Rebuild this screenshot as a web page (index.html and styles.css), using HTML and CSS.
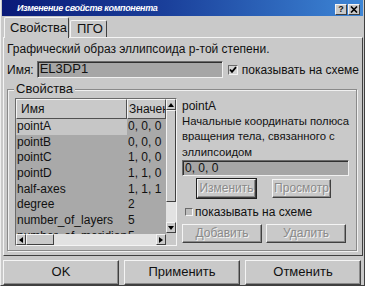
FILE: index.html
```html
<!DOCTYPE html>
<html>
<head>
<meta charset="utf-8">
<link rel="stylesheet" href="styles.css">
</head>
<body>
<div class="win">
  <div class="title">
    <span class="title-text">Изменение свойств компонента</span>
    <div class="tbtns">
      <span class="tbtn">?</span>
      <span class="tbtn"><svg width="8" height="7" viewBox="0 0 8 7"><path d="M1 0.5L7 6.5M7 0.5L1 6.5" stroke="#000" stroke-width="1.6"/></svg></span>
    </div>
  </div>
  <div class="tabs">
    <div class="tab active">Свойства</div>
    <div class="tab">ПГО</div>
  </div>
  <div class="panel">
    <div class="desc">Графический образ эллипсоида p-той степени.</div>
    <div class="namerow">
      <span class="lbl">Имя:</span>
      <div class="field name">EL3DP1</div>
      <span class="chk"><svg width="8" height="8" viewBox="0 0 8 8"><path d="M1 3.5L3 5.8L7 1.2" fill="none" stroke="#000" stroke-width="1.8"/></svg></span>
      <span class="chk-text">показывать на схеме</span>
    </div>
    <div class="group">
      <span class="legend">Свойства</span>
      <div class="list">
        <div class="list-main">
          <div class="list-head">
            <div class="hcell c1">Имя</div>
            <div class="hcell c2">Значен</div>
          </div>
          <div class="rows">
            <div class="row sel"><span class="c1">pointA</span><span class="c2">0, 0, 0</span></div>
            <div class="row"><span class="c1">pointB</span><span class="c2">0, 0, 0</span></div>
            <div class="row"><span class="c1">pointC</span><span class="c2">1, 0, 0</span></div>
            <div class="row"><span class="c1">pointD</span><span class="c2">1, 1, 0</span></div>
            <div class="row"><span class="c1">half-axes</span><span class="c2">1, 1, 1</span></div>
            <div class="row"><span class="c1">degree</span><span class="c2">2</span></div>
            <div class="row"><span class="c1">number_of_layers</span><span class="c2">5</span></div>
            <div class="row"><span class="c1">number_of_meridians</span><span class="c2">5</span></div>
          </div>
          <div class="hscroll">
            <span class="sbtn"><svg width="4" height="6" viewBox="0 0 4 6"><path d="M4 0L0 3L4 6Z"/></svg></span>
            <span class="hthumb"></span>
            <span class="htrack"></span>
            <span class="sbtn"><svg width="4" height="6" viewBox="0 0 4 6"><path d="M0 0L4 3L0 6Z"/></svg></span>
          </div>
        </div>
        <div class="vscroll">
          <span class="sbtn"><svg width="6" height="4" viewBox="0 0 6 4"><path d="M0 4L3 0L6 4Z"/></svg></span>
          <span class="vthumb"></span>
          <span class="vtrack"></span>
          <span class="sbtn"><svg width="6" height="4" viewBox="0 0 6 4"><path d="M0 0L3 4L6 0Z"/></svg></span>
          <span class="corner"></span>
        </div>
      </div>
      <div class="side">
        <div class="pname">pointA</div>
        <div class="pdesc">Начальные координаты полюса<br>вращения тела, связанного с<br>эллипсоидом</div>
        <div class="field value">0, 0, 0</div>
        <div class="brow1">
          <div class="btn default dis">Изменить</div>
          <div class="btn dis">Просмотр</div>
        </div>
        <div class="chkrow">
          <span class="chk small"></span>
          <span class="chk-text">показывать на схеме</span>
        </div>
        <div class="brow2">
          <div class="btn dis wide">Добавить</div>
          <div class="btn dis wide">Удалить</div>
        </div>
      </div>
    </div>
  </div>
  <div class="bottom">
    <div class="btn big">OK</div>
    <div class="btn big">Применить</div>
    <div class="btn big">Отменить</div>
  </div>
</div>
</body>
</html>
```

FILE: styles.css
```css
* { box-sizing: border-box; }
html, body { margin: 0; padding: 0; }
body {
  width: 365px;
  height: 286px;
  overflow: hidden;
  font-family: "Liberation Sans", Arial, sans-serif;
  font-size: 12px;
  color: #111;
  background: #c9c9c9;
}
.win {
  width: 365px;
  height: 286px;
  background: #c9c9c9;
  border-left: 1px solid #efefef;
  border-right: 1px solid #404040;
  border-bottom: 1px solid #404040;
  display: flex;
  flex-direction: column;
  padding: 0 1px 0 1px;
}
.title {
  height: 16px;
  background: linear-gradient(to right, #0a1a78 0%, #1a3f9a 45%, #3d86d6 100%);
  display: flex;
  align-items: center;
  justify-content: space-between;
  padding: 0 3px 0 15px;
}
.title-text {
  color: #fff;
  font-weight: bold;
  font-size: 9px;
  letter-spacing: -0.35px;
  font-style: italic;
  white-space: nowrap;
}
.tbtns { display: flex; gap: 1px; margin-top: 3px; }
.tbtn {
  width: 12px;
  height: 11px;
  background: #c9c9c9;
  border: 1px solid;
  border-color: #f4f4f4 #404040 #404040 #f4f4f4;
  font-size: 9px;
  font-weight: bold;
  line-height: 9px;
  text-align: center;
  display: flex;
  align-items: center;
  justify-content: center;
}
.tabs {
  display: flex;
  align-items: flex-end;
  height: 20px;
  padding-left: 2px;
  margin-top: 1px;
  position: relative;
  z-index: 1;
}
.tab {
  height: 17px;
  padding: 0 6px;
  font-size: 13px;
  line-height: 16px;
  border: 1px solid;
  border-color: #f4f4f4 #404040 transparent #f4f4f4;
  border-bottom: none;
  background: #c9c9c9;
  border-radius: 2px 2px 0 0;
}
.tab.active {
  height: 21px;
  width: 65px;
  margin-bottom: -1px;
  line-height: 19px;
  padding: 0 5px;
}
.tab + .tab { margin-left: 1px; width: 37px; }
.panel {
  width: 360px;
  height: 219px;
  margin-left: 1px;
  border: 1px solid;
  border-color: #f4f4f4 #404040 #404040 #f4f4f4;
  padding: 4px 3px 0 3px;
  display: flex;
  flex-direction: column;
}
.desc { height: 14px; line-height: 14px; white-space: nowrap; }
.namerow {
  margin-top: 5px;
  height: 17px;
  display: flex;
  align-items: center;
}
.lbl { width: 30px; }
.field {
  background: #a6a6a6;
  border: 1px solid;
  border-color: #6a6a6a #f0f0f0 #f0f0f0 #6a6a6a;
  box-shadow: inset 1px 1px 0 #303030;
  height: 17px;
  line-height: 14px;
  padding-left: 2px;
  white-space: nowrap;
}
.field.name { width: 188px; font-size: 13px; }
.chk {
  width: 10px;
  height: 10px;
  margin-left: 5px;
  margin-right: 4px;
  background: #d4d4d4;
  border: 1px solid;
  border-color: #6a6a6a #f4f4f4 #f4f4f4 #6a6a6a;
  display: flex;
  align-items: center;
  justify-content: center;
}
.chk.small { width: 8px; height: 8px; margin-left: 3px; margin-right: 2px; background: #bdbdbd; }
.chk-text { white-space: nowrap; }
.group {
  position: relative;
  margin-top: 11px;
  width: 350px;
  height: 162px;
  border: 1px solid #8a8a8a;
  box-shadow: inset 1px 1px 0 #f0f0f0, 1px 1px 0 #f0f0f0;
  padding: 8px 6px 3px 7px;
  display: flex;
}
.legend {
  position: absolute;
  left: 6px;
  top: -8px;
  padding: 0 2px;
  background: #c9c9c9;
  font-size: 13px;
  line-height: 14px;
}
.list {
  width: 162px;
  height: 148px;
  border: 1px solid;
  border-color: #6a6a6a #f4f4f4 #f4f4f4 #6a6a6a;
  display: flex;
  background: #a9a9a9;
}
.list-main {
  width: 150px;
  display: flex;
  flex-direction: column;
}
.list-head {
  height: 20px;
  display: flex;
  background: #c9c9c9;
}
.hcell {
  height: 20px;
  line-height: 18px;
  border: 1px solid;
  border-color: #f4f4f4 #505050 #505050 #f4f4f4;
  font-size: 12px;
  white-space: nowrap;
  overflow: hidden;
}
.hcell.c1 { width: 111px; padding-left: 4px; }
.hcell.c2 { flex: 1; padding-left: 1px; }
.rows {
  height: 115px;
  overflow: hidden;
}
.row {
  height: 15.7px;
  line-height: 15.7px;
  display: flex;
  white-space: nowrap;
}
.row .c1 { width: 111px; padding-left: 1px; overflow: hidden; }
.row .c2 { padding-left: 1px; }
.row.sel .c1 { background: #c6c6c6; }
.hscroll {
  height: 11px;
  display: flex;
  background: #dcdcdc;
}
.sbtn {
  width: 10px;
  height: 11px;
  flex: none;
  background: #c9c9c9;
  border: 1px solid;
  border-color: #f4f4f4 #404040 #404040 #f4f4f4;
  display: flex;
  align-items: center;
  justify-content: center;
}
.hthumb {
  width: 28px;
  background: #c9c9c9;
  border: 1px solid;
  border-color: #f4f4f4 #404040 #404040 #f4f4f4;
}
.htrack { flex: 1; background: #e2e2e2; }
.vscroll {
  width: 10px;
  display: flex;
  flex-direction: column;
  background: #e2e2e2;
}
.vscroll .sbtn { width: 10px; height: 11px; }
.vthumb {
  height: 92px;
  background: #c9c9c9;
  border: 1px solid;
  border-color: #f4f4f4 #404040 #404040 #f4f4f4;
}
.vtrack { flex: 1; background: #e2e2e2; }
.corner { height: 12px; background: #c9c9c9; }
.side {
  margin-left: 5px;
  width: 167px;
  display: flex;
  flex-direction: column;
  font-size: 12px;
}
.pname { line-height: 15px; margin-top: 1px; }
.pdesc { line-height: 15.4px; white-space: nowrap; font-size: 11.3px; }
.field.value { width: 167px; height: 16px; margin-top: 0; }
.brow1 {
  display: flex;
  margin-top: 3px;
  padding-left: 15px;
  gap: 16px;
}
.btn {
  height: 19px;
  background: #c9c9c9;
  border: 1px solid;
  border-color: #f4f4f4 #404040 #404040 #f4f4f4;
  box-shadow: inset -1px -1px 0 #8a8a8a;
  text-align: center;
  line-height: 17px;
  white-space: nowrap;
}
.btn.dis {
  color: #8a8a8a;
  text-shadow: 1px 1px 0 #f4f4f4;
}
.brow1 .btn { width: 59px; }
.btn.default { outline: 1px solid #202020; }
.chkrow {
  display: flex;
  align-items: center;
  margin-top: 9px;
  height: 10px;
}
.brow2 {
  display: flex;
  gap: 4px;
  margin-top: 7px;
}
.btn.wide { width: 80px; height: 19px; }
.bottom {
  display: flex;
  gap: 5px;
  margin-top: 4px;
  padding-left: 1px;
}
.btn.big {
  width: 116px;
  height: 25px;
  line-height: 22px;
  font-size: 13px;
}
```
